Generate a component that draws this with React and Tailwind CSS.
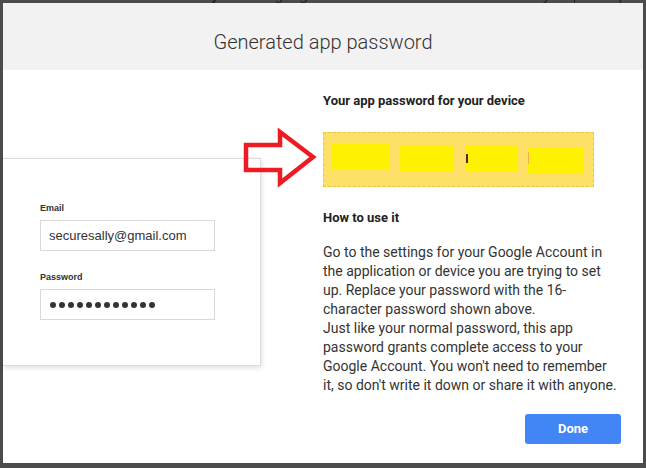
import React from 'react'

const tabs = [
  { label: 'Personal info', x: 'ml-[45px]' },
  { label: 'Security', x: 'ml-[30px] font-bold' },
  { label: 'Language', x: 'ml-[31px]' },
  { label: 'Data tools', x: 'ml-[30px]' },
  { label: 'Account history', x: 'ml-[32px]' },
]

function Arrow() {
  return (
    <svg
      className="absolute left-[242px] top-[128px]"
      width="76"
      height="60"
      viewBox="0 0 76 60"
    >
      <polygon
        points="4,17 38,17 38,4 71,29 38,55 38,42 4,42"
        fill="none"
        stroke="#ed1c24"
        strokeWidth="4.5"
        strokeLinejoin="miter"
      />
    </svg>
  )
}

function SignInCard() {
  return (
    <div className="mt-[88px] h-[208px] w-[258px] border-y border-r border-[#dcdcdc] bg-white shadow-[1px_2px_5px_rgba(0,0,0,0.12)] pl-[37px] pt-[44px] font-['Liberation_Sans',Arial,sans-serif]">
      <div className="text-[9px] font-bold text-[#333] leading-[11px]">Email</div>
      <div className="mt-[6px] flex h-[31px] w-[175px] items-center border border-[#d9d9d9] pl-[8px] text-[13px] text-[#333]">
        securesally@gmail.com
      </div>
      <div className="mt-[21px] text-[9px] font-bold text-[#333] leading-[11px]">Password</div>
      <div className="mt-[6px] flex h-[31px] w-[175px] items-center gap-[3px] border border-[#d9d9d9] pl-[9px]">
        {Array.from({ length: 12 }).map((_, i) => (
          <span key={i} className="h-[6px] w-[6px] rounded-full bg-[#333]" />
        ))}
      </div>
    </div>
  )
}

function PasswordBox() {
  return (
    <div className="mt-[23px] flex h-[55px] w-[271px] items-start border border-dashed border-[#e6c54a] bg-[#fde068]">
      <div className="ml-[8px] mt-[11px] h-[26px] w-[57px] bg-[#fff200]" />
      <div className="ml-[10px] mt-[12px] h-[26px] w-[54px] bg-[#fff200]" />
      <div className="ml-[13px] mt-[13px] flex h-[25px] w-[51px] bg-[#fff200]">
        <span className="mt-[8px] h-[9px] w-[2px] bg-[#5a2a10]" />
      </div>
      <div className="ml-[11px] mt-[15px] flex h-[25px] w-[55px] bg-[#fff200]">
        <span className="mt-[4px] h-[12px] w-px bg-[#f3b050]" />
      </div>
    </div>
  )
}

export default function App() {
  return (
    <div className="relative h-[468px] w-[646px] overflow-hidden bg-[#4b4b4b] font-['Roboto',sans-serif]">
      <div className="-mt-[13px] flex h-[16px] items-center text-[15px] text-[#222]">
        {tabs.map((t) => (
          <span key={t.label} className={t.x}>
            {t.label}
          </span>
        ))}
        <span className="ml-[24px] h-[16px] w-px bg-[#222]" />
        <span className="ml-[21px]">Help</span>
      </div>

      <div className="absolute left-[3px] top-[3px] flex h-[460px] w-[640px] flex-col bg-white">
        <div className="flex h-[67px] items-center justify-center bg-[#f2f2f2] pt-[10px] text-[20px] font-light text-[#333]">
          Generated app password
        </div>
        <div className="flex flex-1">
          <SignInCard />
          <div className="ml-[62px] flex w-[298px] flex-col pt-[23px] text-[#333]">
            <div className="text-[13px] font-bold leading-[16px] text-[#222]">
              Your app password for your device
            </div>
            <PasswordBox />
            <div className="mt-[23px] text-[13px] font-bold leading-[16px] text-[#222]">How to use it</div>
            <p className="mt-[17px] w-[297px] text-[14px] leading-[19px]">
              Go to the settings for your Google Account in the application or device you are trying to set up.
              Replace your password with the 16-character password shown above.
              <br />
              Just like your normal password, this app password grants complete access to your Google Account.
              You won't need to remember it, so don't write it down or share it with anyone.
            </p>
            <div className="mt-[19px] flex justify-end">
              <button className="h-[30px] w-[96px] rounded-[3px] bg-[#4285f4] text-[13px] font-bold text-white">
                Done
              </button>
            </div>
          </div>
        </div>
      </div>

      <Arrow />
    </div>
  )
}
